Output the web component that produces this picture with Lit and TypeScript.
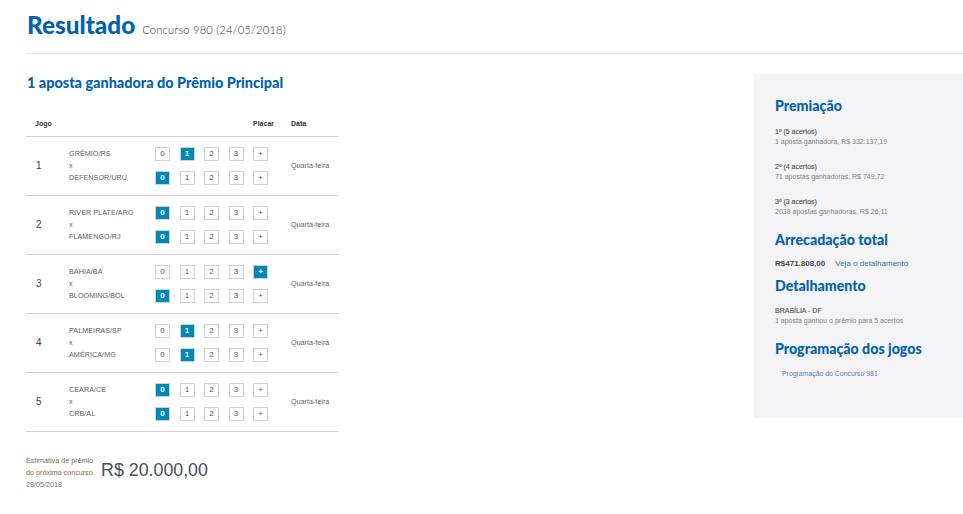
import { LitElement, html, css } from "lit";
import { customElement } from "lit/decorators.js";

const games = [
  { n: 1, a: "GRÊMIO/RS", b: "DEFENSOR/URU", sa: 1, sb: 0 },
  { n: 2, a: "RIVER PLATE/ARG", b: "FLAMENGO/RJ", sa: 0, sb: 0 },
  { n: 3, a: "BAHIA/BA", b: "BLOOMING/BOL", sa: 4, sb: 0 },
  { n: 4, a: "PALMEIRAS/SP", b: "AMÉRICA/MG", sa: 1, sb: 1 },
  { n: 5, a: "CEARÁ/CE", b: "CRB/AL", sa: 0, sb: 0 },
];
const labels = ["0", "1", "2", "3", "+"];

@customElement("app-root")
export class AppRoot extends LitElement {
  static styles = css`
    :host { display: block; width: 963px; height: 514px; overflow: hidden; background: #fff; font-family: "Liberation Sans", Arial, sans-serif; color: #555; }
    .head { margin-left: 26px; height: 53px; border-bottom: 1px solid #e6e6e6; display: flex; align-items: baseline; gap: 7px; padding-left: 1px; }
    h1, h2, h3 { font-family: "Lato", sans-serif; font-weight: 900; color: #0062ab; margin: 0; }
    h1 { font-size: 24.3px; line-height: 49px; }
    .sub { font-family: "Lato", sans-serif; font-size: 11.2px; font-weight: 300; color: #333; letter-spacing: .18px; }
    .cols { display: flex; justify-content: space-between; align-items: flex-start; }
    .main { margin-left: 26px; width: 313px; padding-top: 20px; }
    h2 { font-size: 14.45px; line-height: 18px; padding-left: 1px; }
    .thead { display: grid; grid-template-columns: 218px 38px 1fr; margin-top: 26px; height: 17px; padding: 1px 0 0 9px; border-bottom: 1px solid #d4d4d8; font-size: 7px; font-weight: 700; color: #333; line-height: 10px; }
    .row { display: grid; grid-template-columns: 43px 86px 184px; height: 58px; border-bottom: 1px solid #d4d4d8; align-items: center; }
    .num { font-size: 10px; padding: 0 0 2px 10px; color: #444; }
    .teams { font-size: 7.2px; line-height: 12px; letter-spacing: .05px; color: #5c5c5c; display: flex; flex-direction: column; }
    .score { display: flex; flex-direction: column; gap: 10px; }
    .btns { display: flex; }
    .right { display: grid; grid-template-columns: 136px 1fr; align-items: center; font-size: 7.2px; color: #666; }
    .date { padding-bottom: 2px; }
    .b { width: 15px; height: 14px; margin-right: 9.5px; box-sizing: border-box; border: 1px solid #d0d0d4; background: #fff; font-size: 8px; line-height: 11px; text-align: center; color: #555; }
    .b.on { background: #0088b8; color: #fff; font-weight: 700; }
    .est { display: flex; align-items: flex-start; gap: 8px; margin-top: 23px; }
    .est-l { font-size: 7.2px; line-height: 12px; color: #7a6a4f; }
    .est-v { font-size: 17.8px; line-height: 30px; color: #444f5c; }
    aside { width: 209px; height: 344px; margin-top: 20px; background: #f3f3f6; padding: 23px 0 0 21px; box-sizing: border-box; }
    h3 { font-size: 14.2px; line-height: 18px; }
    .p { margin-top: 12px; font-size: 7px; line-height: 10px; color: #7d7d7d; }
    .p.tight { margin-top: 11px; }
    .p b { display: block; font-weight: 400; color: #555; -webkit-text-stroke: .15px #555; }
    .p + .p { margin-top: 15px; }
    .total { font-size: 8px; color: #444; margin: 10px 0 8px; font-weight: 700; display: flex; gap: 10px; align-items: baseline; line-height: 10px; }
    .total a { font-size: 8px; font-weight: 400; color: #3f6a9a; }
    .prog { display: block; font-size: 6.9px; line-height: 10px; color: #5f7ba0; margin: 11px 0 0 7px; }
    .mt { margin-top: 14px; }
  `;

  private btns(sel: number) {
    return html`<div class="btns">${labels.map((l, i) => html`<div class="b ${i === sel ? "on" : ""}">${l}</div>`)}</div>`;
  }

  render() {
    return html`
      <div class="head"><h1>Resultado</h1><span class="sub">Concurso 980 (24/05/2018)</span></div>
      <div class="cols">
        <div class="main">
          <h2>1 aposta ganhadora do Prêmio Principal</h2>
          <div class="thead"><span>Jogo</span><span>Placar</span><span>Data</span></div>
          ${games.map((g) => html`
            <div class="row">
              <div class="num">${g.n}</div>
              <div class="teams"><span>${g.a}</span><span>x</span><span>${g.b}</span></div>
              <div class="right">
                <div class="score">${this.btns(g.sa)}${this.btns(g.sb)}</div>
                <div class="date">Quarta-feira</div>
              </div>
            </div>`)}
          <div class="est">
            <div class="est-l">Estimativa de prêmio<br />do próximo concurso<br />28/05/2018</div>
            <div class="est-v">R$ 20.000,00</div>
          </div>
        </div>
        <aside>
          <h3>Premiação</h3>
          <div class="p"><b>1º (5 acertos)</b>1 aposta ganhadora, R$ 332.137,19</div>
          <div class="p"><b>2º (4 acertos)</b>71 apostas ganhadoras, R$ 749,72</div>
          <div class="p"><b>3º (3 acertos)</b>2038 apostas ganhadoras, R$ 26,11</div>
          <h3 class="mt">Arrecadação total</h3>
          <div class="total">R$471.808,00 <a>Veja o detalhamento</a></div>
          <h3>Detalhamento</h3>
          <div class="p tight"><b>BRASÍLIA - DF</b>1 aposta ganhou o prêmio para 5 acertos</div>
          <h3 class="mt">Programação dos jogos</h3>
          <a class="prog">Programação do Concurso 981</a>
        </aside>
      </div>
    `;
  }
}
